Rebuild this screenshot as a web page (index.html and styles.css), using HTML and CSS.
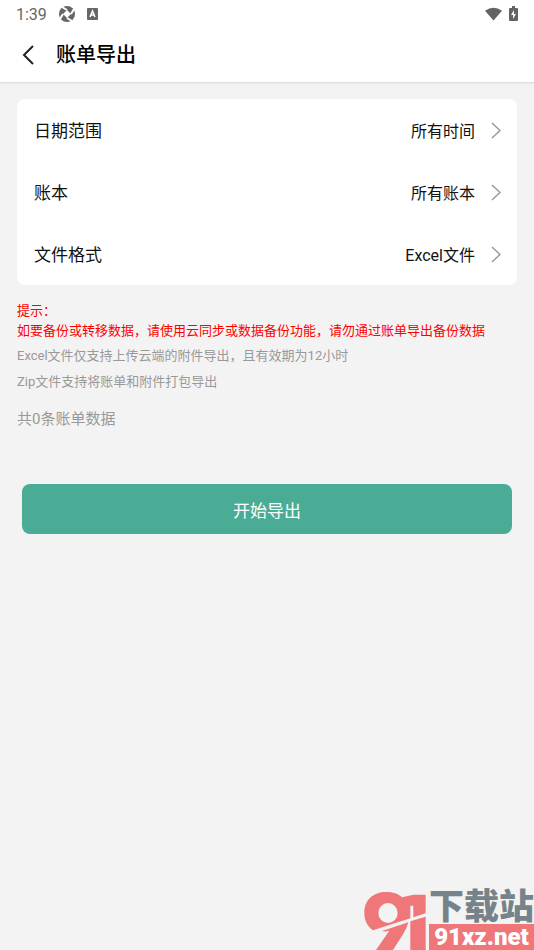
FILE: index.html
```html
<!DOCTYPE html>
<html lang="zh-CN">
<head>
<meta charset="utf-8">
<meta name="viewport" content="width=device-width, initial-scale=1">
<title>账单导出</title>
<link rel="stylesheet" href="styles.css">
</head>
<body>
<header class="top">
  <div class="status">
    <span class="clock">1:39</span>
    <svg viewBox="0 0 16 16" width="16" height="16" aria-hidden="true">
      <circle cx="8" cy="8" r="8" fill="#666" />
      <path d="M8 4L12 8L8 12L4 8Z" fill="#fff" />
      <path d="M8 4L3 1M12 8L15 3M8 12L13 15M4 8L1 13" stroke="#fff" stroke-width="2" />
    </svg>
    <svg viewBox="0 0 11 12" width="11" height="12" aria-hidden="true">
      <rect width="11" height="12" rx="1" fill="#666" />
      <path d="M3 9L5.500 3L8 9M4 7H7" fill="none" stroke="#fff" stroke-width="1.500" />
    </svg>
    <span class="spacer"></span>
    <span class="system">
      <svg viewBox="0 0 18 14" width="17" height="14" aria-hidden="true">
        <path d="M0 3.500Q9-3 18 3.500L9 14Z" fill="#636363" />
      </svg>
      <svg viewBox="0 0 9 16" width="9" height="16" aria-hidden="true">
        <path d="M3 0H6V2H8Q9 2 9 3V14Q9 15 8 15H1Q0 15 0 14V3Q0 2 1 2H3Z" fill="#636363" />
        <path d="M5 4L2 9H4V13L7 8H5Z" fill="#fff" />
      </svg>
    </span>
  </div>
  <div class="title-bar">
    <button class="back" type="button" aria-label="返回">
      <svg viewBox="0 0 12 20" width="12" height="20" aria-hidden="true"><path d="M11 1L2 10L11 19" /></svg>
    </button>
    <h1>账单导出</h1>
  </div>
</header>
<main>
  <section class="card">
    <button class="row" type="button"><span class="label">日期范围</span><span class="value">所有时间</span><svg class="chevron" viewBox="0 0 10 17" width="10" height="17" aria-hidden="true"><path d="M1 1L9 8.500L1 16" /></svg></button>
    <button class="row" type="button"><span class="label">账本</span><span class="value">所有账本</span><svg class="chevron" viewBox="0 0 10 17" width="10" height="17" aria-hidden="true"><path d="M1 1L9 8.500L1 16" /></svg></button>
    <button class="row" type="button"><span class="label">文件格式</span><span class="value">Excel文件</span><svg class="chevron" viewBox="0 0 10 17" width="10" height="17" aria-hidden="true"><path d="M1 1L9 8.500L1 16" /></svg></button>
  </section>
  <section class="notes">
    <p class="warning">提示：<br>如要备份或转移数据，请使用云同步或数据备份功能，请勿通过账单导出备份数据</p>
    <p class="note">Excel文件仅支持上传云端的附件导出，且有效期为12小时</p>
    <p class="note">Zip文件支持将账单和附件打包导出</p>
    <p class="count">共0条账单数据</p>
  </section>
  <button class="export" type="button">开始导出</button>
</main>
<footer class="mark">
  <svg class="emblem" viewBox="0 0 186 177" width="62" height="59" aria-hidden="true">
    <path class="coral" fill-rule="evenodd" d="M1 65C1 27 28 3 66 3C88 3 103 8 114 19L148 11H185V67L148 79V44H139V82L27 118C10 106 1 88 1 65ZM43 66A29 30 0 1 0 101 66A29 30 0 1 0 43 66Z" />
    <path class="coral" d="M54 120L133 94Q130 109 118 128L87 177H36L76 119Q63 123 54 120ZM139 91L185 77V177H139Z" />
  </svg>
  <div class="mark-text">
    <span class="mark-name">下载站</span>
    <span class="mark-site">91xz.net</span>
  </div>
</footer>
</body>
</html>
```
FILE: styles.css
```css
* {
  box-sizing: border-box;
}

body {
  margin: 0;
  min-height: 100vh;
  display: flex;
  flex-direction: column;
  background: #f3f3f3;
  color: #111;
  font-family: Roboto, "Noto Sans CJK SC", sans-serif;
}

button {
  margin: 0;
  padding: 0;
  border: 0;
  background: none;
  color: inherit;
  font: inherit;
}

svg {
  display: block;
  flex: none;
}

.top {
  background: #fff;
  box-shadow: 0 1px 2px rgba(0, 0, 0, 0.12);
}

.status {
  display: flex;
  align-items: center;
  height: 28px;
  padding: 0 16px;
  gap: 12px;
  color: #666;
  font-size: 16px;
}

.spacer {
  flex: 1;
}

.system {
  display: flex;
  align-items: center;
  gap: 7px;
}

.title-bar {
  display: flex;
  align-items: center;
  gap: 22px;
  height: 54px;
  padding: 0 22px;
}

.back path {
  fill: none;
  stroke: #222;
  stroke-width: 2;
}

h1 {
  margin: 0;
  font-size: 20px;
  line-height: 28px;
  font-weight: 500;
  color: #000;
}

main {
  padding: 17px;
}

.card {
  border-radius: 8px;
  background: #fff;
}

.row {
  display: flex;
  align-items: center;
  width: 100%;
  height: 62px;
  padding: 0 16px 0 17px;
  text-align: left;
}

.label {
  flex: 1;
  padding-bottom: 2px;
  font-size: 17px;
}

.value {
  margin-right: 16px;
  font-size: 16px;
}

.chevron path {
  fill: none;
  stroke: #999;
  stroke-width: 1.5;
}

.notes {
  padding-top: 16px;
  color: #999;
  font-size: 13px;
}

.notes p {
  margin: 0;
}

.notes .warning {
  margin-bottom: 2px;
  color: #f00;
  line-height: 20px;
}

.note {
  line-height: 26px;
}

.notes .count {
  margin-top: 12px;
  font-size: 15px;
  line-height: 24px;
}

.export {
  display: block;
  width: calc(100% - 10px);
  height: 50px;
  margin: 53px 5px 0;
  border-radius: 8px;
  background: #4aac94;
  color: #fff;
  font-size: 17px;
}

.mark {
  display: flex;
  justify-content: flex-end;
  align-items: flex-end;
  gap: 3px;
  margin-top: auto;
}

.coral {
  fill: #ef777a;
}

.mark-text {
  display: flex;
  flex-direction: column;
}

.mark-name {
  color: #76838a;
  font-size: 35px;
  line-height: 33px;
  font-weight: 900;
}

.mark-site {
  background: #ef777a;
  color: #fff;
  font-size: 24px;
  line-height: 26px;
  font-weight: 900;
  text-align: center;
}
```
